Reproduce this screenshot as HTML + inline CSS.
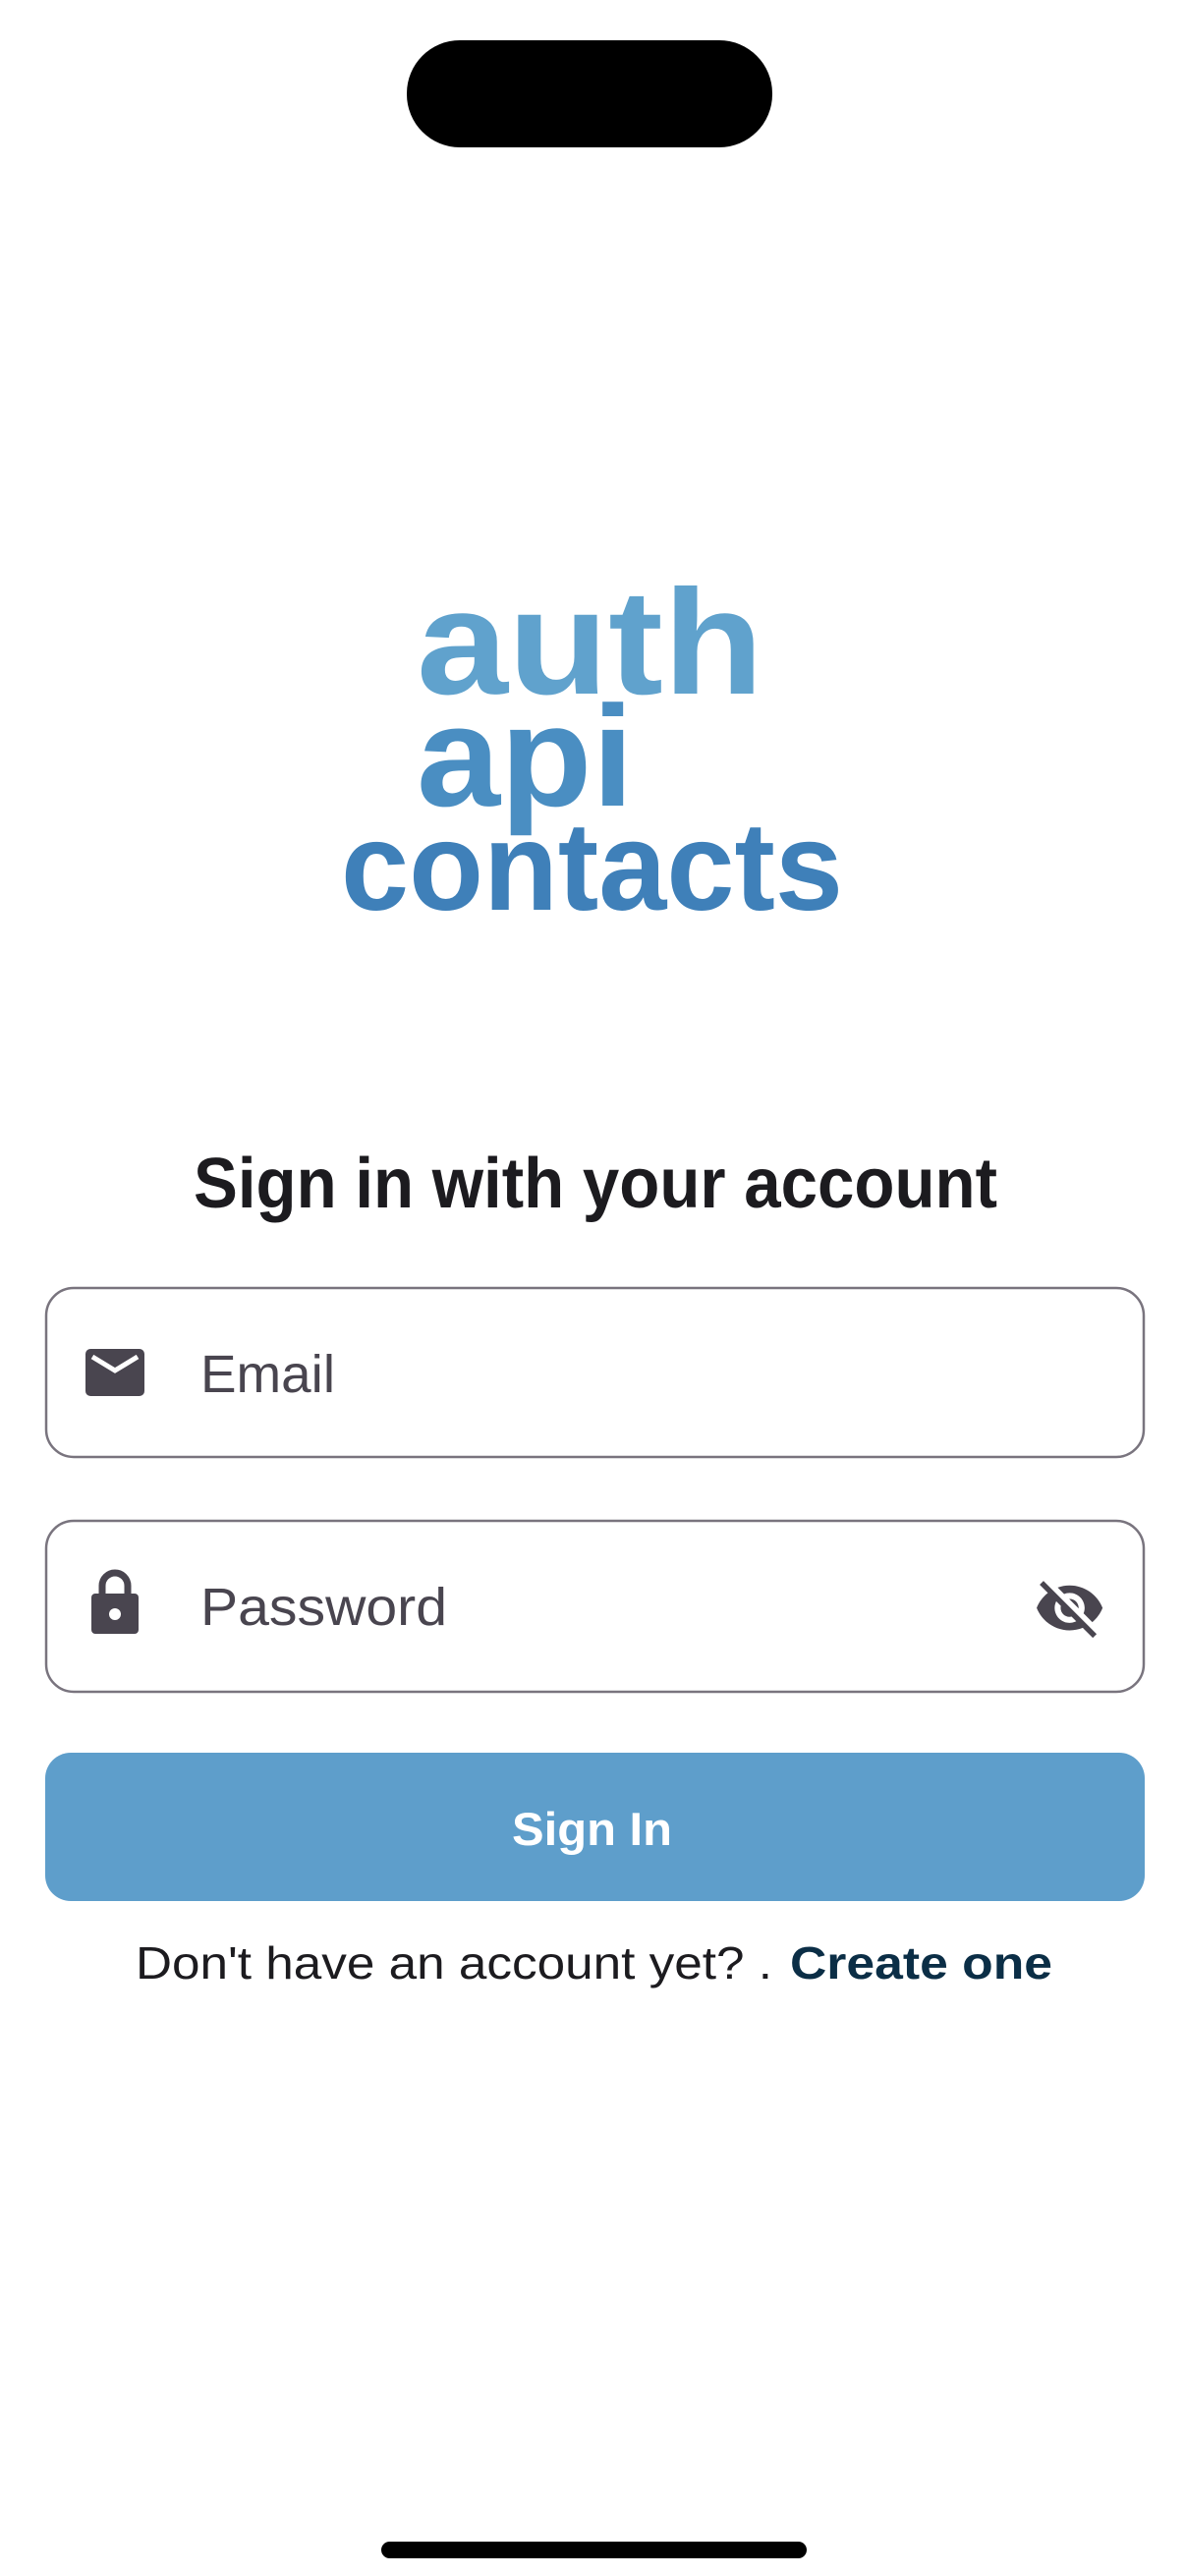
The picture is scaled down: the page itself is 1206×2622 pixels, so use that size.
<!DOCTYPE html>
<html><head><meta charset="utf-8"><style>
html,body{margin:0;padding:0;background:#fff;}
svg{display:block;}
</style></head><body>
<svg width="1206" height="2622" viewBox="0 0 1206 2622" xmlns="http://www.w3.org/2000/svg">
<rect width="1206" height="2622" fill="#fff"/>
<rect x="414" y="41" width="372" height="109" rx="54" fill="#000"/>
<g font-family="Liberation Sans, sans-serif" font-weight="bold">
<text x="424" y="706" font-size="152" fill="#60A2CD" textLength="353" lengthAdjust="spacingAndGlyphs">auth</text>
<text x="424" y="820" font-size="146" fill="#4A8EC2" textLength="221" lengthAdjust="spacingAndGlyphs">api</text>
<text x="347" y="926" font-size="128" fill="#3F80B9" textLength="511" lengthAdjust="spacingAndGlyphs">contacts</text>
</g>
<text x="197" y="1229" font-family="Liberation Sans, sans-serif" font-weight="bold" font-size="72" fill="#1c1b1f" textLength="818" lengthAdjust="spacingAndGlyphs">Sign in with your account</text>
<rect x="47" y="1311" width="1117" height="172" rx="28" fill="none" stroke="#79747e" stroke-width="2.5"/>
<rect x="47" y="1548" width="1117" height="174" rx="28" fill="none" stroke="#79747e" stroke-width="2.5"/>
<rect x="87" y="1373" width="60" height="48" rx="5" fill="#49454f"/>
<path d="M94 1381 L117 1395 L140 1381" fill="none" stroke="#fff" stroke-width="5"/>
<text x="204" y="1417" font-family="Liberation Sans, sans-serif" font-size="54" fill="#49454f" textLength="137" lengthAdjust="spacingAndGlyphs">Email</text>
<path d="M104 1624 V1614 A13 13 0 0 1 130 1614 V1624" fill="none" stroke="#49454f" stroke-width="7"/>
<rect x="93" y="1622" width="48" height="41" rx="4" fill="#49454f"/>
<circle cx="117" cy="1643" r="6" fill="#fff"/>
<text x="204" y="1654" font-family="Liberation Sans, sans-serif" font-size="54" fill="#49454f" textLength="251" lengthAdjust="spacingAndGlyphs">Password</text>
<g transform="translate(1052,1600) scale(3.05)" fill="#49454f">
<path d="M12 7c2.76 0 5 2.24 5 5 0 .65-.13 1.26-.36 1.830l2.92 2.92c1.51-1.26 2.7-2.89 3.43-4.750-1.73-4.39-6-7.5-11-7.5-1.4 0-2.74.25-3.980.7l2.16 2.16C10.74 7.13 11.35 7 12 7zM2 4.27l2.28 2.28.46.46C3.08 8.3 1.78 10.02 1 12c1.73 4.39 6 7.5 11 7.5 1.55 0 3.03-.3 4.38-.84l.42.42L19.73 22 21 20.73 3.27 3 2 4.27zM7.53 9.8l1.55 1.55c-.05.21-.08.43-.08.65 0 1.66 1.340 3 3 3 .22 0 .44-.03.65-.08l1.55 1.55c-.67.33-1.41.53-2.2.53-2.76 0-5-2.240-5-5 0-.79.2-1.53.53-2.2zm4.31-.78l3.150 3.15.02-.16c0-1.66-1.34-3-3-3l-.17.01z"/>
</g>
<rect x="46" y="1784" width="1119" height="151" rx="26" fill="#5E9ECB"/>
<text x="521" y="1878" font-family="Liberation Sans, sans-serif" font-weight="bold" font-size="47" fill="#fff" textLength="163" lengthAdjust="spacingAndGlyphs">Sign In</text>
<text x="138" y="2014" font-family="Liberation Sans, sans-serif" font-size="46" fill="#1c1b1f" textLength="648" lengthAdjust="spacingAndGlyphs">Don't have an account yet? .</text>
<text x="804" y="2014" font-family="Liberation Sans, sans-serif" font-weight="bold" font-size="46" fill="#0b2e46" textLength="267" lengthAdjust="spacingAndGlyphs">Create one</text>
<rect x="388" y="2587" width="433" height="17" rx="8.5" fill="#000"/>
</svg>
</body></html>
